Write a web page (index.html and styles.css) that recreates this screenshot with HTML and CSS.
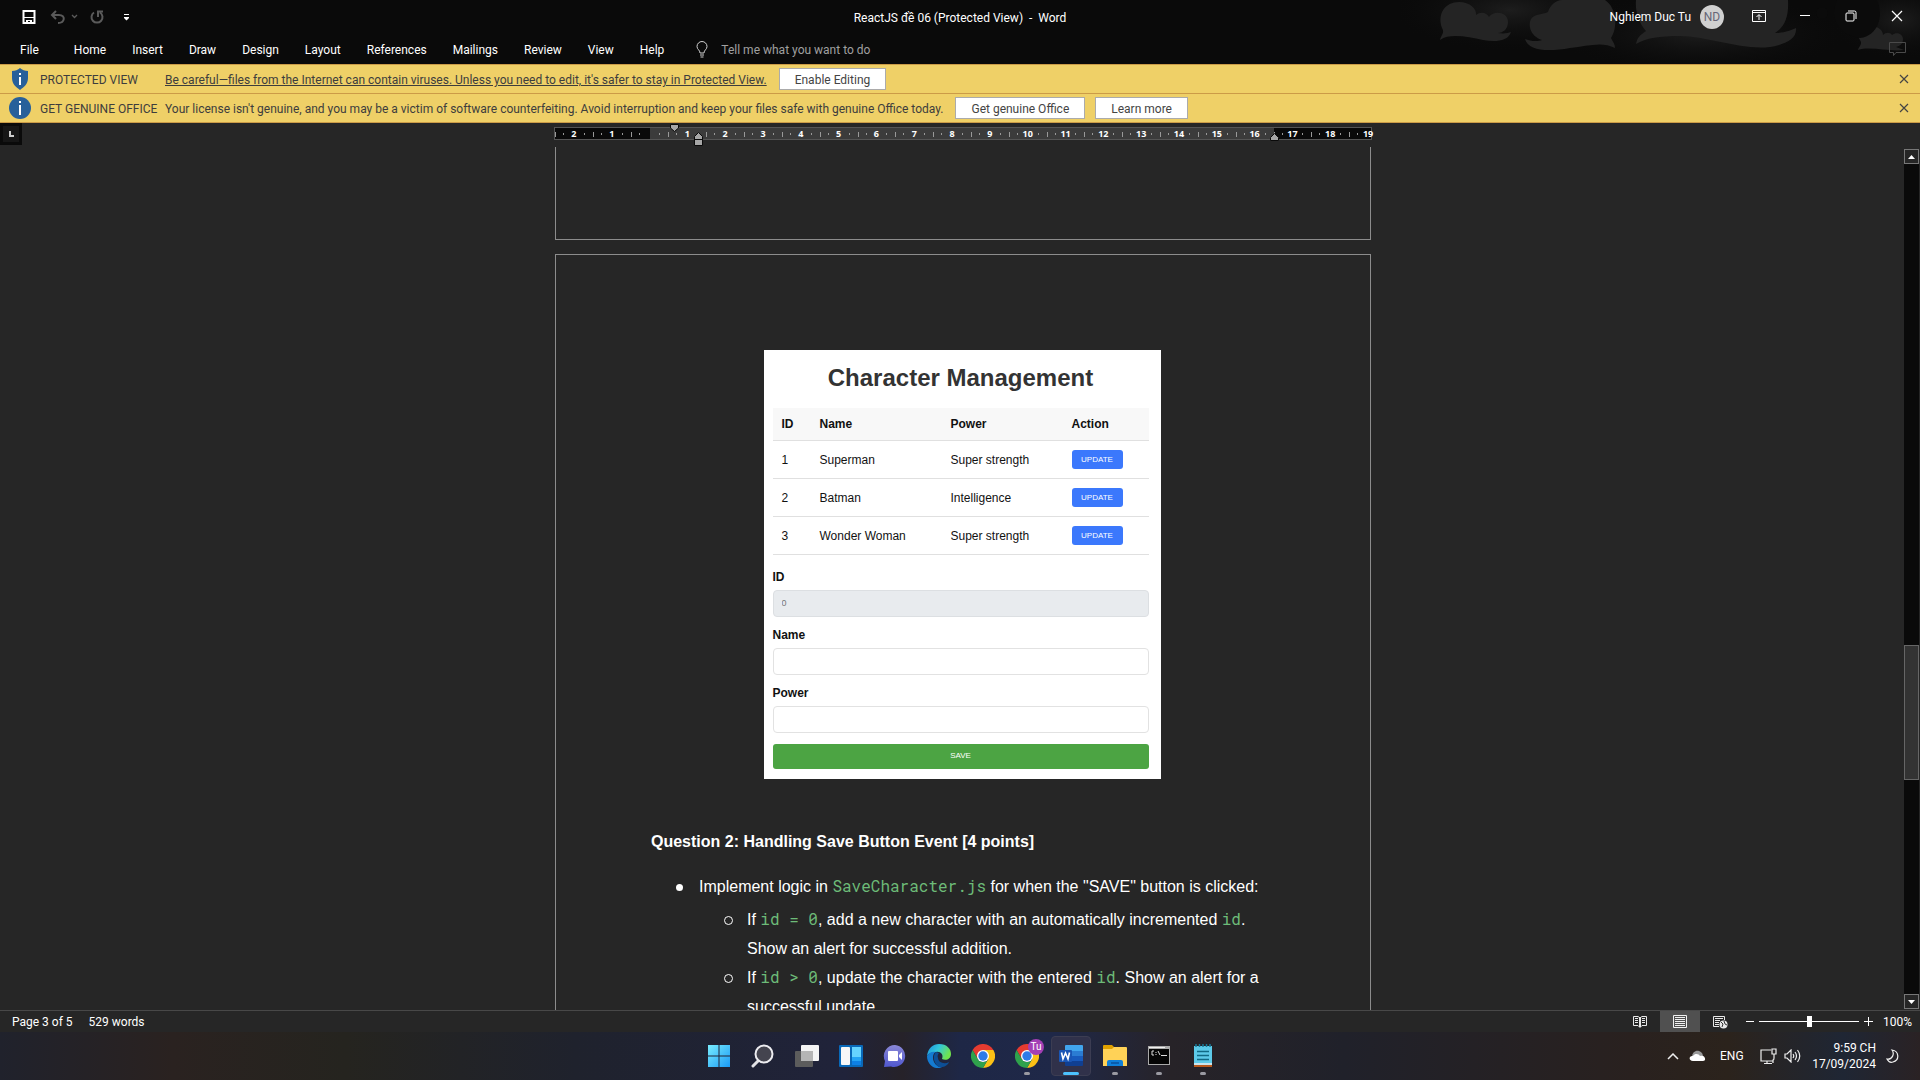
FILE: index.html
```html
<!DOCTYPE html>
<html lang="en">
<head>
<meta charset="utf-8">
<title>ReactJS đề 06 (Protected View) - Word</title>
<link rel="stylesheet" href="styles.css">
</head>
<body>
<header class="titlebar">
  <svg class="clouds" width="520" height="64" viewBox="0 0 520 64" aria-hidden="true">
    <defs>
      <radialGradient id="haze"><stop offset="0" stop-color="#1d1d1d"/><stop offset="1" stop-color="#0a0a0a" stop-opacity="0"/></radialGradient>
    </defs>
    <ellipse cx="110" cy="10" rx="120" ry="42" fill="url(#haze)"/>
    <ellipse cx="300" cy="34" rx="150" ry="40" fill="url(#haze)"/>
    <ellipse cx="500" cy="20" rx="70" ry="40" fill="url(#haze)"/>
    <g fill="#242424">
      <path d="M40 40C41 35 45 33 42 28C37 14 45 2 59 2C70 2 77 9 76 15C81 11 87 13 89 17C94 10 108 12 108 22C108 29 103 33 98 33C104 34 108 33 111 32C108 42 94 42 83 40C68 37 50 33 40 40Z"/>
      <path d="M125 39C130 41 137 42 142 40C130 36 128 25 131 19C136 13 142 15 148 12C150 5 156 0 162 0H205C217 8 218 28 211 38C213 42 215 44 215 48C202 41 188 46 170 48C148 52 128 51 125 39Z"/>
      <path d="M236 0H388C389 16 385 27 375 33C385 33 391 30 396 28C397 37 389 42 379 45C350 54 310 36 280 36C260 36 246 38 236 44C237 38 240 35 246 31C238 22 235 10 236 0Z"/>
      <path d="M458 50C459 46 463 44 460 40C455 32 462 26 470 26C478 26 483 30 483 35C486 32 490 32 492 35C497 31 503 34 503 39C503 44 500 46 496 47L504 50C490 52 470 46 458 50Z"/>
    </g>
    <g fill="#0b0b0b"><path d="M437 0H477C484 16 478 36 460 38C440 36 428 18 437 0Z"/><circle cx="422" cy="13" r="6"/></g>
  </svg>
  <div class="title-row">
    <div class="quick">
      <button class="ico" aria-label="Save"><svg width="14" height="14" viewBox="0 0 14 14"><path d="M1.500 1H12.500V13H1.500Z" fill="none" stroke="#fff" stroke-width="2"/><path d="M2 7.500H12" stroke="#fff"/><path d="M4 10H10V13H8V11H6V13H4Z" fill="#fff"/></svg></button>
      <button class="ico undo" aria-label="Undo"><svg width="28" height="14" viewBox="0 0 28 14" fill="none" stroke="#5a5a5a"><path d="M6 1L2 5L6 9M2 5H9C16 5 15 13 8 13" stroke-width="2"/><path d="M22 5L24.500 7.500L27 5" stroke-width="1.300"/></svg></button>
      <button class="ico" aria-label="Repeat"><svg width="14" height="14" viewBox="0 0 14 14" fill="none" stroke="#5a5a5a" stroke-width="2"><path d="M4 2.500A5.500 5.500 0 1 0 10 2.500M8 7V1.500H13"/></svg></button>
      <button class="ico more" aria-label="Customize Quick Access Toolbar"><svg width="5" height="7" viewBox="0 0 5 7" fill="#fff"><path d="M0 0H5V1H0ZM0 3H5V4L2.500 6.500L0 4Z"/></svg></button>
    </div>
    <div class="doc-title">ReactJS đề 06 (Protected View)&nbsp; -&nbsp; Word</div>
    <div class="window-tools">
      <span>Nghiem Duc Tu</span>
      <span class="avatar">ND</span>
      <button class="win" aria-label="Ribbon Display Options"><svg width="14" height="12" viewBox="0 0 14 12" fill="none" stroke="#fff"><path d="M.5.5H13.500V11.500H.5ZM.5 2.500H13.500M7 10V5M4.500 7L7 4.500L9.500 7"/></svg></button>
      <button class="win" aria-label="Minimize"><svg width="12" height="12" viewBox="0 0 12 12"><path d="M1 5.500H11" stroke="#fff"/></svg></button>
      <button class="win" aria-label="Restore Down"><svg width="12" height="12" viewBox="0 0 12 12" fill="none" stroke="#fff"><rect x="1" y="3" width="8" height="8" rx="1"/><path d="M3 1H9.500Q11 1 11 2.500V9"/></svg></button>
      <button class="win" aria-label="Close"><svg width="12" height="12" viewBox="0 0 12 12"><path d="M1 1L11 11M11 1L1 11" stroke="#fff" stroke-width="1.200"/></svg></button>
    </div>
  </div>
  <nav class="tabs">
    <a class="file" href="#">File</a><a href="#">Home</a><a href="#">Insert</a><a href="#">Draw</a><a href="#">Design</a><a href="#">Layout</a><a href="#">References</a><a href="#">Mailings</a><a href="#">Review</a><a href="#">View</a><a href="#">Help</a>
    <svg class="bulb" width="12" height="17" viewBox="0 0 12 17" fill="none" stroke="#d0d0d0"><path d="M4 12C4 9 1 8.500 1 5.500A5 5 0 0 1 11 5.500C11 8.500 8 9 8 12ZM4 14H8M4.500 16H7.500"/></svg>
    <input class="tell" type="text" aria-label="Tell me what you want to do" placeholder="Tell me what you want to do">
    <button class="comments" aria-label="Comments"><svg width="17" height="15" viewBox="0 0 17 15"><path d="M.5.5H16.500V10.500H7L4.500 13.500V10.500H.5Z" fill="none" stroke="#4a4a4a"/></svg></button>
  </nav>
</header>

<section class="notice">
  <svg width="18" height="22" viewBox="0 0 18 22"><path d="M9 0C11 2 14 3 17 3V10C17 16 13 19 9 22C5 19 1 16 1 10V3C4 3 7 2 9 0Z" fill="#27609a"/><path d="M8 5H10V7H8ZM8 9H10V17H8Z" fill="#fff"/></svg>
  <strong>PROTECTED VIEW</strong>
  <a href="#">Be careful—files from the Internet can contain viruses. Unless you need to edit, it's safer to stay in Protected View.</a>
  <button class="act">Enable Editing</button>
  <button class="dismiss" aria-label="Close message"><svg width="10" height="10" viewBox="0 0 10 10"><path d="M1 1L9 9M9 1L1 9" stroke="#444" stroke-width="1.200"/></svg></button>
</section>
<section class="notice">
  <svg width="22" height="22" viewBox="0 0 22 22"><circle cx="11" cy="11" r="11" fill="#27609a"/><path d="M10 4H12V6H10ZM10 8H12V18H10Z" fill="#fff"/></svg>
  <strong>GET GENUINE OFFICE</strong>
  <span>Your license isn't genuine, and you may be a victim of software counterfeiting. Avoid interruption and keep your files safe with genuine Office today.</span>
  <button class="act">Get genuine Office</button>
  <button class="act">Learn more</button>
  <button class="dismiss" aria-label="Close message"><svg width="10" height="10" viewBox="0 0 10 10"><path d="M1 1L9 9M9 1L1 9" stroke="#444" stroke-width="1.200"/></svg></button>
</section>

<div class="ruler-row">
  <button class="tabstop" aria-label="Tab selector"><svg width="5" height="6" viewBox="0 0 5 6"><path d="M1 0V5H5" fill="none" stroke="#ccc" stroke-width="2"/></svg></button>
  <div class="ruler">
    <ol class="scale">
      <li>2</li><li>1</li><li></li><li>1</li><li>2</li><li>3</li><li>4</li><li>5</li><li>6</li><li>7</li><li>8</li><li>9</li><li>10</li><li>11</li><li>12</li><li>13</li><li>14</li><li>15</li><li>16</li><li>17</li><li>18</li><li>19</li>
    </ol>
    <svg class="mark first" width="9" height="8" viewBox="0 0 9 8"><path d="M.5.5H8.500V4L4.500 7.500L.5 4Z" fill="#a6a6a6" stroke="#0a0a0a"/></svg>
    <svg class="mark hanging" width="9" height="14" viewBox="0 0 9 14"><path d="M.5 13.500V4.500L4.500.5L8.500 4.500V13.500ZM.5 7.500H8.500" fill="#a6a6a6" stroke="#0a0a0a"/></svg>
    <svg class="mark right" width="9" height="8" viewBox="0 0 9 8"><path d="M.5 7.500V4.500L4.500.5L8.500 4.500V7.500Z" fill="#a6a6a6" stroke="#0a0a0a"/></svg>
  </div>
</div>

<main class="workspace">
  <div class="canvas">
    <article class="page previous"></article>
    <article class="page current">
      <div class="mock">
        <h1>Character Management</h1>
        <table>
          <colgroup><col class="c-id"><col class="c-name"><col class="c-power"><col></colgroup>
          <thead><tr><th>ID</th><th>Name</th><th>Power</th><th>Action</th></tr></thead>
          <tbody>
            <tr><td>1</td><td>Superman</td><td>Super strength</td><td><button>UPDATE</button></td></tr>
            <tr><td>2</td><td>Batman</td><td>Intelligence</td><td><button>UPDATE</button></td></tr>
            <tr><td>3</td><td>Wonder Woman</td><td>Super strength</td><td><button>UPDATE</button></td></tr>
          </tbody>
        </table>
        <form>
          <label for="cid">ID</label><input id="cid" value="0" disabled>
          <label for="cname">Name</label><input id="cname">
          <label for="cpower">Power</label><input id="cpower">
          <button type="button">SAVE</button>
        </form>
      </div>
      <h2>Question 2: Handling Save Button Event [4 points]</h2>
      <ul class="steps">
        <li>Implement logic in <code>SaveCharacter.js</code> for when the "SAVE" button is clicked:
          <ul>
            <li>If <code>id = 0</code>, add a new character with an automatically incremented <code>id</code>.<br>Show an alert for successful addition.</li>
            <li>If <code>id &gt; 0</code>, update the character with the entered <code>id</code>. Show an alert for a<br>successful update.</li>
          </ul>
        </li>
      </ul>
    </article>
  </div>
  <div class="scrollbar">
    <button aria-label="Scroll up"><svg width="7" height="4" viewBox="0 0 7 4"><path d="M0 4L3.500 0L7 4Z" fill="#fff"/></svg></button>
    <div class="track"><div class="thumb"></div></div>
    <button aria-label="Scroll down"><svg width="7" height="4" viewBox="0 0 7 4"><path d="M0 0L3.500 4L7 0Z" fill="#fff"/></svg></button>
  </div>
</main>

<footer class="status">
  <span>Page 3 of 5</span><span>529 words</span>
  <div class="views">
    <button aria-label="Read Mode"><svg width="14" height="14" viewBox="0 0 14 14" fill="none" stroke="#e8e8e8"><path d="M6.500 2.500L5 1.500H.5V10.500H5L7 12.500L9 10.500H13.500V1.500H9L7.500 2.500M6.500 2V12M7.500 2V12M2 3.500H5M2 5.500H5M2 7.500H5M9 3.500H12M9 5.500H12M9 7.500H12"/></svg></button>
    <button class="on" aria-label="Print Layout"><svg width="14" height="13" viewBox="0 0 14 13" fill="none" stroke="#f0f0f0"><path d="M.5.5H13.500V12.500H.5ZM2 2.500H12M2 4.500H12M2 6.500H12M2 8.500H12M2 10.500H12"/></svg></button>
    <button aria-label="Web Layout"><svg width="15" height="14" viewBox="0 0 15 14" fill="none" stroke="#e8e8e8"><path d="M6 11.500H.5V1.500H11.500V5M2 3.500H10M2 5.500H7M2 7.500H6M2 9.500H6"/><circle cx="10.500" cy="9.500" r="4" fill="#e8e8e8" stroke="none"/><path d="M8 7L10 9L9 12M11 6L12 9L14 10" stroke="#333"/></svg></button>
    <button class="zoom" aria-label="Zoom out"><svg width="8" height="9" viewBox="0 0 8 9"><path d="M0 4.500H8" stroke="#fff"/></svg></button>
    <input type="range" min="0" max="100" value="50" aria-label="Zoom">
    <button class="zoom" aria-label="Zoom in"><svg width="9" height="9" viewBox="0 0 9 9"><path d="M0 4.500H9M4.500 0V9" stroke="#fff"/></svg></button>
    <span class="percent">100%</span>
  </div>
</footer>

<div class="taskbar">
  <div class="apps">
    <button aria-label="Start"><svg width="24" height="24" viewBox="0 0 24 24"><defs><linearGradient id="win" x1="0" y1="0" x2="24" y2="24" gradientUnits="userSpaceOnUse"><stop offset="0" stop-color="#7df1ff"/><stop offset="1" stop-color="#1696f5"/></linearGradient></defs><path d="M1 1H11.500V11.500H1ZM12.500 1H23V11.500H12.500ZM1 12.500H11.500V23H1ZM12.500 12.500H23V23H12.500Z" fill="url(#win)"/></svg></button>
    <button aria-label="Search"><svg width="24" height="24" viewBox="0 0 24 24"><path d="M8 16L2 22" stroke="#e2e2e6" stroke-width="3" stroke-linecap="round"/><circle cx="13" cy="10" r="8.500" fill="#44444f" stroke="#ececf0" stroke-width="2"/></svg></button>
    <button aria-label="Task View"><svg width="24" height="24" viewBox="0 0 24 24"><rect x="6" y="1" width="18" height="16" rx="1" fill="#f4f4f4"/><rect y="7" width="18" height="16" rx="1" fill="#5c5c5c"/><path d="M6 7H18V17H6Z" fill="#b5b5b5"/></svg></button>
    <button aria-label="Widgets"><svg width="24" height="24" viewBox="0 0 24 24"><rect y="1" width="24" height="22" rx="1" fill="#0969b9"/><rect x="2" y="3" width="9" height="18" rx="1" fill="#f7f7f7"/><path d="M13 3H22V13H13Z" fill="#66d4ff"/><path d="M13 13H22V17H13Z" fill="#24a5f5"/><path d="M13 17H22V21H13Z" fill="#0d80e4"/></svg></button>
    <button aria-label="Chat"><svg width="24" height="24" viewBox="0 0 24 24"><defs><linearGradient id="chat" x2="0" y2="1"><stop offset="0" stop-color="#8a87d5"/><stop offset="1" stop-color="#5058cf"/></linearGradient></defs><path d="M12 1A11 11 0 1 1 8 22.500L1 23L2 17A11 11 0 0 1 12 1Z" fill="url(#chat)"/><rect x="5" y="7" width="10" height="10" rx="1" fill="#fff"/><path d="M16 11L19 8V16L16 13Z" fill="#fff"/></svg></button>
    <button aria-label="Edge"><svg width="24" height="24" viewBox="0 0 24 24"><defs><linearGradient id="edge" x2="1" y2=".4"><stop offset="0" stop-color="#1b8ddd"/><stop offset=".5" stop-color="#32c6dc"/><stop offset="1" stop-color="#6fe34e"/></linearGradient></defs><path d="M0 12C1 4 6 0 12 0C20 0 24 5 24 10C24 15 19 17 15 15C17 10 13 7 9 8C5 8 2 9 0 12Z" fill="url(#edge)"/><path d="M0 12C2 8 6 7 9 8C6 9 5 14 7 18C9 22 13 24 16 23C7 27 0 20 0 12Z" fill="#147bd1"/><path d="M9 8C5 12 7 20 12 23C17 24 21 21 22 18C17 21 11 18 11 14C10 12 11 10 12 9Z" fill="#0d4f96"/></svg></button>
    <button aria-label="Chrome"><svg width="24" height="24" viewBox="0 0 24 24"><path d="M1.600 6A12 12 0 0 1 22.400 6H12L6.800 15Z" fill="#e53b30"/><path d="M22.400 6A12 12 0 0 1 12 24L17.200 15L12 6Z" fill="#fbc116"/><path d="M12 24A12 12 0 0 1 1.600 6L6.800 15A6 6 0 0 0 17.200 15Z" fill="#2fa24c"/><circle cx="12" cy="12" r="6" fill="#fff"/><circle cx="12" cy="12" r="4.700" fill="#2f7be9"/></svg></button>
    <button class="running" aria-label="Chrome, profile Tu"><svg width="24" height="24" viewBox="0 0 24 24"><path d="M1.600 6A12 12 0 0 1 22.400 6H12L6.800 15Z" fill="#e53b30"/><path d="M22.400 6A12 12 0 0 1 12 24L17.200 15L12 6Z" fill="#fbc116"/><path d="M12 24A12 12 0 0 1 1.600 6L6.800 15A6 6 0 0 0 17.200 15Z" fill="#2fa24c"/><circle cx="12" cy="12" r="6" fill="#fff"/><circle cx="12" cy="12" r="4.700" fill="#2f7be9"/></svg><span class="badge">Tu</span></button>
    <button class="running active" aria-label="Word"><svg width="24" height="24" viewBox="0 0 24 24"><path d="M6 2Q6 1 7 1H23Q24 1 24 2V7H6Z" fill="#41a5ee"/><path d="M6 7H24V12H6Z" fill="#2b7cd3"/><path d="M6 12H24V17H6Z" fill="#185abd"/><path d="M6 17H24V21Q24 22 23 22H7Q6 22 6 21Z" fill="#103f91"/><rect y="6" width="13" height="12" rx="1" fill="#1a56b5"/><path d="M2.500 8.500L4 15L6.500 9L9 15L10.500 8.500" fill="none" stroke="#fff" stroke-width="1.600"/></svg></button>
    <button class="running" aria-label="File Explorer"><svg width="24" height="24" viewBox="0 0 24 24"><path d="M0 2Q0 1 1 1H9L11 3V7H0Z" fill="#e0a100"/><path d="M0 5H9L11 3H23Q24 3 24 4V22H0Z" fill="#ffd257"/><path d="M4 22V18Q4 16 6 16H18Q20 16 20 18V22Z" fill="#0f7fd8"/><path d="M8 19H16" stroke="#0a5cab" stroke-width="2"/></svg></button>
    <button class="running" aria-label="Command Prompt"><svg width="24" height="24" viewBox="0 0 24 24"><rect x="1" y="2" width="22" height="19" fill="#aaa"/><path d="M2 5H22V20H2Z" fill="#050505"/><path d="M2 3.500H18" stroke="#f0f0f0"/><path d="M7 7H5V11H7M9 8V9M9 10V11M11 7L13 11M14 11.500H20" stroke="#ddd" fill="none"/></svg></button>
    <button class="running" aria-label="Notepad"><svg width="24" height="24" viewBox="0 0 24 24"><path d="M3 2H21V21H3Z" fill="#5dcae9"/><path d="M3 21H21V23H3Z" fill="#b8591d"/><path d="M3 20H21" stroke="#eee" stroke-width="1.500"/><path d="M6 7.500H18M6 11.500H18M6 15.500H18" stroke="#116a85" stroke-width="1.700"/><path d="M5 0V3M8.500 0V3M12 0V3M15.500 0V3M19 0V3" stroke="#177a98" stroke-width="1.500"/></svg></button>
  </div>
  <div class="tray">
    <svg width="12" height="7" viewBox="0 0 12 7"><path d="M1 6L6 1L11 6" fill="none" stroke="#eee" stroke-width="1.500"/></svg>
    <svg width="17" height="12" viewBox="0 0 17 12"><path d="M3 7C3 2 7 0 10 1C13 2 14 4 14 7Z" fill="#999"/><path d="M4 11C-1 11 0 5 4 6C6 3 10 4 11 6C16 4 18 11 14 11Z" fill="#fff"/></svg>
    <span class="lang">ENG</span>
    <svg width="17" height="17" viewBox="0 0 17 17" fill="none" stroke="#eee" stroke-width="1.200"><path d="M11 2H1V13H13M4 15.500H12M7 13V15M12 1H16V6H12ZM14 6V10Q14 12 13 12V15"/></svg>
    <svg class="sound" width="17" height="14" viewBox="0 0 17 14" fill="none" stroke="#eee" stroke-width="1.200"><path d="M1 5H3L7 1V13L3 9H1ZM9 5Q10.500 7 9 9M11 3Q14 7 11 11M13.500 1Q18 7 13.500 13"/></svg>
    <div class="clock"><span>9:59 CH</span><span>17/09/2024</span></div>
    <svg width="13" height="14" viewBox="0 0 13 14"><path d="M6 1C13 2 14 11 7 13C4 14 2 12 1 10C6 11 9 5 6 1Z" fill="none" stroke="#eee" stroke-width="1.200"/></svg>
  </div>
</div>
</body>
</html>
```
FILE: styles.css
```css
* { box-sizing: border-box; }
html, body { height: 100%; }
body {
  margin: 0;
  display: flex;
  flex-direction: column;
  overflow: hidden;
  background: #262626;
  color: #fff;
  font: 12px/16px Roboto, "Noto Sans", sans-serif;
}
button, input { font: inherit; color: inherit; margin: 0; }
button { display: flex; align-items: center; justify-content: center; padding: 0; border: 0; background: none; white-space: nowrap; }
a { color: inherit; text-decoration: none; }
svg { display: block; flex: none; }

/* Title bar and ribbon tabs */
.titlebar { position: relative; background: #0a0a0a; height: 64px; flex: none; }
.clouds { position: absolute; top: 0; right: 0; }
.title-row { position: relative; display: grid; grid-template-columns: 1fr auto 1fr; height: 34px; align-items: center; }
.doc-title { padding-top: 2px; }
.quick { display: flex; align-items: center; padding-left: 22px; gap: 14px; }
.undo + .ico { margin-left: -2px; }
.more { margin-left: 6px; }
.window-tools { display: flex; align-items: center; justify-content: flex-end; }
.avatar { width: 24px; height: 24px; margin: 0 12px 0 9px; border-radius: 50%; background: #d0d0d0; color: #667; line-height: 24px; text-align: center; }
.win { width: 46px; height: 28px; padding-bottom: 2px; }
.tabs { position: relative; display: flex; align-items: center; height: 30px; padding: 1px 14px 0 20px; gap: 26px; }
.tabs .file { margin-right: 9px; }
.bulb { margin-left: 6px; }
.tell { width: 200px; margin-left: -13px; padding: 0; border: 0; background: none; outline: 0; }
.tell::placeholder { color: #a0a0a0; opacity: 1; }
.comments { margin-left: auto; }

/* Message bars */
.notice { display: flex; align-items: center; flex: none; height: 29px; padding: 0 11px 0 9px; background: #efd067; border-top: 1px solid #cb9b47; color: #3d3d3d; white-space: nowrap; }
.notice + .notice { height: 30px; border-bottom: 1px solid #cb9b47; }
.notice > svg { width: 22px; }
.notice strong { width: 125px; margin-left: 9px; padding-top: 2px; font-weight: 400; }
.notice a, .notice span { padding-top: 2px; }
.notice a { text-decoration: underline; }
.act { height: 22px; margin-left: 12px; padding: 1px 15px 0; border: 1px solid #ababab; background: #fff; color: #444; }
.act + .act { margin-left: 10px; }
.dismiss { margin-left: auto; }

/* Ruler */
.ruler-row { display: flex; flex: none; height: 24px; padding-right: 16px; }
.tabstop { width: 22px; height: 22px; border: 3px solid #0a0a0a; background: #161616; }
.ruler { position: relative; width: 818px; height: 13px; margin: 4px auto 0; border: 1px solid #555; background: linear-gradient(90deg, #0a0a0a 95px, #3b3b3b 95px, #3b3b3b 719px, #0a0a0a 719px); }
.scale { display: grid; grid-template-columns: repeat(22, 1fr); width: 832px; margin: 0; padding: 0; list-style: none; font: bold 9px/11px "Noto Sans", sans-serif; }
.scale li { display: flex; align-items: center; justify-content: space-between; padding: 0 8px; background: linear-gradient(#999, #999) 0 4px / 1px 5px no-repeat; }
.scale li::before, .scale li::after { content: ""; width: 1px; height: 2px; background: #999; }
.scale li:last-child::after { visibility: hidden; }
.mark { position: absolute; }
.first { left: 115px; top: -4px; }
.hanging { left: 139px; top: 4px; }
.right { left: 715px; top: 5px; }

/* Document */
.workspace { display: flex; flex: 1; min-height: 0; }
.canvas { flex: 1; min-width: 0; padding-left: 22px; overflow: hidden; }
.page { width: 816px; margin: 0 auto; border: 1px solid #8c8c8c; }
.previous { height: 93px; border-top: 0; }
.current { margin-top: 14px; padding: 95px 97px 96px 95px; font: 16px/30px "Liberation Sans", Arial, sans-serif; }
.current h2 { margin: 48px 0 15px; font-size: 16px; line-height: 30px; }
.steps, .steps ul { margin: 0; padding: 0; list-style: none; }
.steps > li { padding-left: 48px; }
.steps ul { padding-top: 3px; line-height: 29px; }
.steps ul > li { padding-left: 48px; }
.steps li::before { content: ""; float: left; width: 7px; height: 7px; margin: 12px 0 0 -23px; border-radius: 50%; background: #fff; }
.steps ul li::before { margin-top: 11px; border: 1px solid #fff; background: none; }
code { color: #6dbb78; font: 16px/24px "Roboto Mono", "DejaVu Sans Mono", monospace; }

/* Form mock-up inside the document */
.mock { width: 397px; height: 429px; margin: 0 auto; padding: 13px 12px 10px 9px; background: #fff; color: #111; font: 12px/14px "Liberation Sans", Arial, sans-serif; }
.mock h1 { margin: 0 0 15px; color: #333; font-size: 24px; line-height: 30px; text-align: center; }
.mock table { width: 100%; table-layout: fixed; border-collapse: collapse; }
.c-id { width: 38px; }
.c-name { width: 131px; }
.c-power { width: 121px; }
.mock th, .mock td { height: 38px; padding: 1px 0 0 9px; border-bottom: 1px solid #e0e0e0; text-align: left; }
.mock th { height: 32px; background: #f8f8f8; }
.mock td button { width: 51px; height: 19px; padding-top: 1px; border-radius: 3px; background: #3b78fc; color: #fff; font-size: 8px; }
.mock form { display: flex; flex-direction: column; padding-top: 15px; }
.mock label { margin-bottom: 6px; font-weight: 700; }
.mock input { height: 27px; margin-bottom: 11px; padding: 0 8px; border: 1px solid #e2e2e2; border-radius: 4px; background: #fff; font-size: 9px; }
.mock input:disabled { border-color: #dcdfe2; background: #e8ebee; color: #777; }
.mock form button { height: 25px; border-radius: 3px; background: #4ca443; color: #fff; font-size: 8px; }

/* Scroll bar */
.scrollbar { display: flex; flex-direction: column; width: 16px; padding: 2px 1px 1px 0; }
.scrollbar button { height: 15px; border: 1px solid #777; background: #262626; }
.track { display: flex; flex-direction: column; flex: 1; background: #0a0a0a; }
.track::before { content: ""; flex: 482; }
.track::after { content: ""; flex: 214; }
.thumb { flex: 133; border: 1px solid #666; background: #333; }

/* Status bar */
.status { display: flex; align-items: center; flex: none; height: 22px; padding: 0 8px 0 12px; gap: 16px; border-top: 1px solid #484848; }
.views { display: flex; align-items: center; margin-left: auto; }
.views button { width: 40px; height: 21px; }
.views .on { background: #505050; }
.views .zoom { width: 18px; }
.views .zoom:nth-child(4) { margin-left: 1px; }
.views input { width: 100px; height: 12px; appearance: none; background: linear-gradient(#fff, #fff) 0 5px / 100% 1px no-repeat; }
.views input::-webkit-slider-thumb { appearance: none; width: 5px; height: 11px; background: #fff; }
.percent { width: 35px; text-align: right; }

/* Taskbar */
.taskbar { display: grid; grid-template-columns: 1fr auto 1fr; align-items: center; flex: none; height: 48px; background: linear-gradient(90deg, #20222c, #2a2220 9%, #25241f 18%, #1f222d 30%, #20233a 44%, #262229 47%, #1e2746 50%, #1f2848 55%, #272328 61%, #20212a 70%, #29211f 85%, #2b231c 90%, #1f2634 96%, #2a2224); }
.apps { display: flex; grid-column: 2; gap: 4px; padding-left: 2px; }
.apps button { position: relative; width: 40px; height: 40px; border-radius: 4px; }
.apps .active { border: 1px solid #3c3d52; background: #30314a; }
.running::after { content: ""; position: absolute; left: 17px; bottom: 1px; width: 6px; height: 3px; border-radius: 2px; background: #9a9aa2; }
.active::after { left: 11px; bottom: 0; width: 16px; background: #4cc2ff; }
.badge { position: absolute; top: 3px; right: 3px; width: 16px; height: 16px; border-radius: 50%; background: #a33fb5; font-size: 10px; line-height: 16px; text-align: center; }
.tray { display: flex; align-items: center; justify-content: flex-end; padding-right: 21px; gap: 10px; }
.lang { width: 22px; margin: 0 8px 0 4px; }
.sound { margin-left: -3px; }
.clock { display: flex; flex-direction: column; align-items: flex-end; width: 61px; margin-left: 4px; }
```
